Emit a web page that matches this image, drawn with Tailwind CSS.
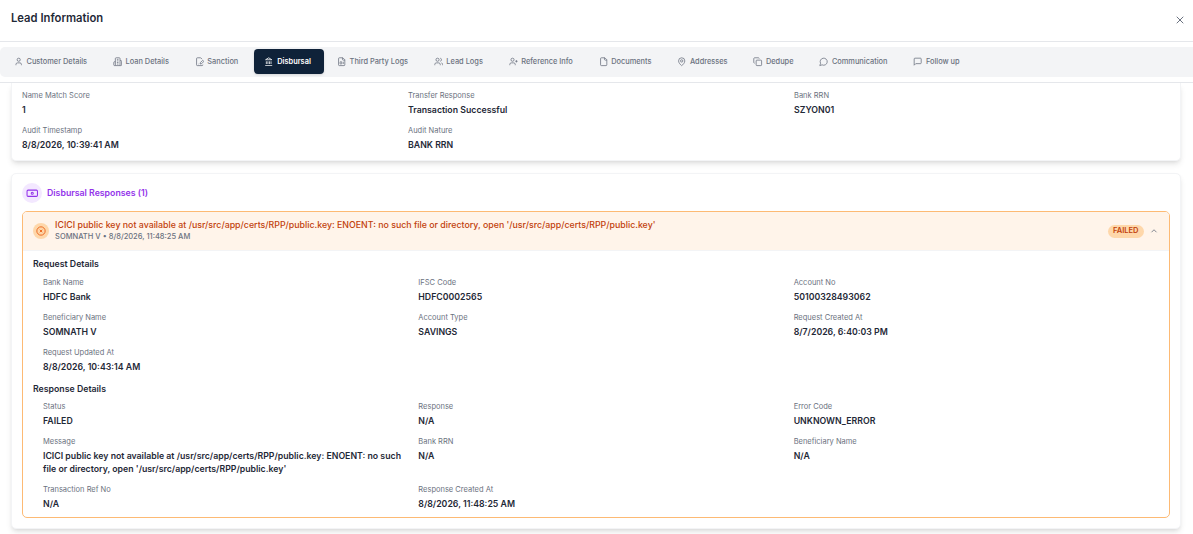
<!DOCTYPE html>
<html lang="en">
<head>
    <meta charset="UTF-8">
    <title>Lead Information</title>
    <script src="https://cdn.jsdelivr.net/npm/@tailwindcss/browser@4"></script>
</head>
<body class="bg-white font-['Inter',sans-serif] antialiased">
<div class="h-[534px] w-[1193px] overflow-hidden flex flex-col">

    <!-- Header -->
    <div class="h-[42px] shrink-0 border-b border-[#e5e7eb] flex items-center justify-between pl-[11px] pr-[7px]">
        <h1 class="text-[11.25px] font-semibold text-[#1f2937] -mt-[4px]">Lead Information</h1>
        <svg class="w-[12px] h-[12px] text-[#6b7280] -mt-[2px]" viewBox="0 0 24 24" fill="none" stroke="currentColor" stroke-width="2" stroke-linecap="round"><path d="M18 6 6 18M6 6l12 12"/></svg>
    </div>

    <!-- Tabs -->
    <div class="h-[41px] shrink-0 border-b border-[#e5e7eb] pt-[5px]">
        <div class="h-[30px] bg-[#f3f4f6] rounded-l-[5px] flex items-center gap-[5.9px] pl-[4px] text-[7.4px] font-medium text-[#6b7280]">
            <div class="flex items-center gap-[3.1px] px-[10px]">
                <svg class="w-[9.4px] h-[9.4px]" viewBox="0 0 24 24" fill="none" stroke="currentColor" stroke-width="2"><path d="M19 21v-2a4 4 0 0 0-4-4H9a4 4 0 0 0-4 4v2"/><circle cx="12" cy="7" r="4"/></svg>
                <span>Customer Details</span>
            </div>
            <div class="flex items-center gap-[3.1px] px-[10px]">
                <svg class="w-[9.4px] h-[9.4px]" viewBox="0 0 24 24" fill="none" stroke="currentColor" stroke-width="2"><path d="M6 22V4a2 2 0 0 1 2-2h8a2 2 0 0 1 2 2v18Z"/><path d="M6 12H4a2 2 0 0 0-2 2v6a2 2 0 0 0 2 2h2M18 9h2a2 2 0 0 1 2 2v9a2 2 0 0 1-2 2h-2M10 6h4M10 10h4M10 14h4M10 18h4"/></svg>
                <span>Loan Details</span>
            </div>
            <div class="flex items-center gap-[3.1px] px-[10px]">
                <svg class="w-[9.4px] h-[9.4px]" viewBox="0 0 24 24" fill="none" stroke="currentColor" stroke-width="2"><path d="M20 19.5v.5a2 2 0 0 1-2 2H6a2 2 0 0 1-2-2V4a2 2 0 0 1 2-2h8.5L18 5.5"/><path d="M8 18h1M18.4 9.6a2 2 0 1 1 3 3L17 17l-4 1 1-4Z"/></svg>
                <span>Sanction</span>
            </div>
            <div class="flex items-center gap-[3.6px] w-[70px] h-[25px] -mr-[3px] mb-[1px] pl-[10px] rounded-[4px] bg-[#0f2239] text-white font-semibold shadow-sm">
                <svg class="w-[9.4px] h-[9.4px]" viewBox="0 0 24 24" fill="none" stroke="currentColor" stroke-width="2"><path d="M3 22h18M6 18v-7M10 18v-7M14 18v-7M18 18v-7M12 2l8 5H4Z"/></svg>
                <span>Disbursal</span>
            </div>
            <div class="flex items-center gap-[3.1px] px-[10px]">
                <svg class="w-[9.4px] h-[9.4px]" viewBox="0 0 24 24" fill="none" stroke="currentColor" stroke-width="2"><path d="M15 2H6a2 2 0 0 0-2 2v16a2 2 0 0 0 2 2h12a2 2 0 0 0 2-2V7Z"/><path d="M14 2v4a2 2 0 0 0 2 2h4"/><rect width="4" height="6" x="8" y="12" rx="1"/><path d="M16 12v6"/></svg>
                <span>Third Party Logs</span>
            </div>
            <div class="flex items-center gap-[3.1px] px-[10px]">
                <svg class="w-[9.4px] h-[9.4px]" viewBox="0 0 24 24" fill="none" stroke="currentColor" stroke-width="2"><path d="M16 21v-2a4 4 0 0 0-4-4H6a4 4 0 0 0-4 4v2"/><circle cx="9" cy="7" r="4"/><path d="M22 21v-2a4 4 0 0 0-3-3.900M16 3.100a4 4 0 0 1 0 7.800"/></svg>
                <span>Lead Logs</span>
            </div>
            <div class="flex items-center gap-[3.1px] px-[10px]">
                <svg class="w-[9.4px] h-[9.4px]" viewBox="0 0 24 24" fill="none" stroke="currentColor" stroke-width="2"><path d="M16 21v-2a4 4 0 0 0-4-4H6a4 4 0 0 0-4 4v2"/><circle cx="9" cy="7" r="4"/><path d="M19 8v6M22 11h-6"/></svg>
                <span>Reference Info</span>
            </div>
            <div class="flex items-center gap-[3.1px] px-[10px]">
                <svg class="w-[9.4px] h-[9.4px]" viewBox="0 0 24 24" fill="none" stroke="currentColor" stroke-width="2"><path d="M15 2H6a2 2 0 0 0-2 2v16a2 2 0 0 0 2 2h12a2 2 0 0 0 2-2V7Z"/><path d="M14 2v4a2 2 0 0 0 2 2h4"/></svg>
                <span>Documents</span>
            </div>
            <div class="flex items-center gap-[3.1px] px-[10px]">
                <svg class="w-[9.4px] h-[9.4px]" viewBox="0 0 24 24" fill="none" stroke="currentColor" stroke-width="2"><path d="M20 10c0 5-5.500 10.200-7.400 11.800a1 1 0 0 1-1.200 0C9.500 20.200 4 15 4 10a8 8 0 0 1 16 0"/><circle cx="12" cy="10" r="3"/></svg>
                <span>Addresses</span>
            </div>
            <div class="flex items-center gap-[3.1px] px-[10px]">
                <svg class="w-[9.4px] h-[9.4px]" viewBox="0 0 24 24" fill="none" stroke="currentColor" stroke-width="2"><rect width="14" height="14" x="8" y="8" rx="2"/><path d="M4 16c-1.100 0-2-.9-2-2V4c0-1.100.9-2 2-2h10c1.100 0 2 .9 2 2"/></svg>
                <span>Dedupe</span>
            </div>
            <div class="flex items-center gap-[3.1px] px-[10px]">
                <svg class="w-[9.4px] h-[9.4px]" viewBox="0 0 24 24" fill="none" stroke="currentColor" stroke-width="2"><path d="M7.900 20A9 9 0 1 0 4 16.100L2 22Z"/></svg>
                <span>Communication</span>
            </div>
            <div class="flex items-center gap-[3.1px] px-[10px]">
                <svg class="w-[9.4px] h-[9.4px]" viewBox="0 0 24 24" fill="none" stroke="currentColor" stroke-width="2"><path d="M21 15a2 2 0 0 1-2 2H7l-4 4V5a2 2 0 0 1 2-2h14a2 2 0 0 1 2 2Z"/></svg>
                <span>Follow up</span>
            </div>
        </div>
    </div>

    <!-- Scroll content -->
    <div class="flex-1 pl-[11px] pr-[12px] overflow-hidden">
        <!-- Top card -->
        <div class="h-[78px] bg-white rounded-b-[5px] border-x border-b border-[#f3f4f6] shadow-md pl-[10px] pr-[12.5px] pt-[8px]">
            <div class="grid grid-cols-3 gap-x-[12.5px] gap-y-[9.5px]">
                <div><p class="text-[7.5px] text-[#6b7280] leading-[10px]">Name Match Score</p><p class="text-[8.75px] font-semibold text-[#1f2937] leading-[12.5px] mt-[3px]">1</p></div>
                <div><p class="text-[7.5px] text-[#6b7280] leading-[10px]">Transfer Response</p><p class="text-[8.75px] font-semibold text-[#1f2937] leading-[12.5px] mt-[3px]">Transaction Successful</p></div>
                <div><p class="text-[7.5px] text-[#6b7280] leading-[10px]">Bank RRN</p><p class="text-[8.75px] font-semibold text-[#1f2937] leading-[12.5px] mt-[3px]">SZYON01</p></div>
                <div><p class="text-[7.5px] text-[#6b7280] leading-[10px]">Audit Timestamp</p><p class="text-[8.75px] font-semibold text-[#1f2937] leading-[12.5px] mt-[3px]">8/8/2026, 10:39:41 AM</p></div>
                <div><p class="text-[7.5px] text-[#6b7280] leading-[10px]">Audit Nature</p><p class="text-[8.75px] font-semibold text-[#1f2937] leading-[12.5px] mt-[3px]">BANK RRN</p></div>
            </div>
        </div>

        <!-- Responses card -->
        <div class="mt-[12px] bg-white rounded-[5px] border border-[#f3f4f6] shadow-md px-[10px] pt-[9px] pb-[10px]">
            <div class="flex items-center gap-[5px] h-[20px]">
                <div class="w-[20px] h-[20px] rounded-full bg-[#f3e8ff] flex items-center justify-center text-[#9333ea]">
                    <svg class="w-[12.5px] h-[12.5px]" viewBox="0 0 24 24" fill="none" stroke="currentColor" stroke-width="2"><rect width="20" height="12" x="2" y="6" rx="2"/><circle cx="12" cy="12" r="2"/></svg>
                </div>
                <h2 class="text-[8.75px] font-semibold text-[#9333ea] mt-[1px]">Disbursal Responses (1)</h2>
            </div>

            <div class="mt-[8px] rounded-[5px] border border-[#fdba74] overflow-hidden">
                <div class="h-[39px] bg-[#fff4ea] border-b border-[#f3f4f6] flex items-center pl-[10px] pr-[10px]">
                    <div class="w-[15.6px] h-[15.6px] rounded-full bg-[#fed7aa] flex items-center justify-center text-[#ea580c] shrink-0">
                        <svg class="w-[10px] h-[10px]" viewBox="0 0 24 24" fill="none" stroke="currentColor" stroke-width="2"><circle cx="12" cy="12" r="10"/><path d="m15 9-6 6M9 9l6 6"/></svg>
                    </div>
                    <div class="ml-[6.5px] flex-1 -mt-[1px]">
                        <p class="text-[8.82px] font-medium text-[#c2410c] leading-[12.5px]">ICICI public key not available at /usr/src/app/certs/RPP/public.key: ENOENT: no such file or directory, open '/usr/src/app/certs/RPP/public.key'</p>
                        <p class="text-[7.5px] font-medium text-[#6b7280] leading-[10px]">SOMNATH V • 8/8/2026, 11:48:25 AM</p>
                    </div>
                    <span class="h-[13px] px-[5px] rounded-full bg-[#fed7aa] text-[#c2410c] text-[7.5px] font-semibold flex items-center">FAILED</span>
                    <svg class="ml-[5.5px] w-[10px] h-[10px] text-[#6b7280]" viewBox="0 0 24 24" fill="none" stroke="currentColor" stroke-width="2"><path d="m18 15-6-6-6 6"/></svg>
                </div>
                <div class="pl-[10px] pr-[12.5px] pt-[7px] pb-[6.25px]">
                    <h3 class="text-[8.75px] font-semibold text-[#1f2937] leading-[12.5px]">Request Details</h3>
                    <div class="mt-[7.75px] ml-[10px] grid grid-cols-3 gap-x-[12.5px] gap-y-[9.5px]">
                        <div><p class="text-[7.5px] text-[#6b7280] leading-[10px]">Bank Name</p><p class="text-[8.75px] font-semibold text-[#1f2937] leading-[12.5px] mt-[3px]">HDFC Bank</p></div>
                        <div><p class="text-[7.5px] text-[#6b7280] leading-[10px]">IFSC Code</p><p class="text-[8.75px] font-semibold text-[#1f2937] leading-[12.5px] mt-[3px]">HDFC0002565</p></div>
                        <div><p class="text-[7.5px] text-[#6b7280] leading-[10px]">Account No</p><p class="text-[8.75px] font-semibold text-[#1f2937] leading-[12.5px] mt-[3px]">50100328493062</p></div>
                        <div><p class="text-[7.5px] text-[#6b7280] leading-[10px]">Beneficiary Name</p><p class="text-[8.75px] font-semibold text-[#1f2937] leading-[12.5px] mt-[3px]">SOMNATH V</p></div>
                        <div><p class="text-[7.5px] text-[#6b7280] leading-[10px]">Account Type</p><p class="text-[8.75px] font-semibold text-[#1f2937] leading-[12.5px] mt-[3px]">SAVINGS</p></div>
                        <div><p class="text-[7.5px] text-[#6b7280] leading-[10px]">Request Created At</p><p class="text-[8.75px] font-semibold text-[#1f2937] leading-[12.5px] mt-[3px]">8/7/2026, 6:40:03 PM</p></div>
                        <div><p class="text-[7.5px] text-[#6b7280] leading-[10px]">Request Updated At</p><p class="text-[8.75px] font-semibold text-[#1f2937] leading-[12.5px] mt-[3px]">8/8/2026, 10:43:14 AM</p></div>
                    </div>
                    <h3 class="mt-[9.5px] text-[8.75px] font-semibold text-[#1f2937] leading-[12.5px]">Response Details</h3>
                    <div class="mt-[6.5px] ml-[10px] grid grid-cols-3 gap-x-[12.5px] gap-y-[9.5px]">
                        <div><p class="text-[7.5px] text-[#6b7280] leading-[10px]">Status</p><p class="text-[8.75px] font-semibold text-[#1f2937] leading-[12.5px] mt-[3px]">FAILED</p></div>
                        <div><p class="text-[7.5px] text-[#6b7280] leading-[10px]">Response</p><p class="text-[8.75px] font-semibold text-[#1f2937] leading-[12.5px] mt-[3px]">N/A</p></div>
                        <div><p class="text-[7.5px] text-[#6b7280] leading-[10px]">Error Code</p><p class="text-[8.75px] font-semibold text-[#1f2937] leading-[12.5px] mt-[3px]">UNKNOWN_ERROR</p></div>
                        <div><p class="text-[7.5px] text-[#6b7280] leading-[10px]">Message</p><p class="text-[8.75px] font-semibold text-[#1f2937] leading-[12.5px] mt-[3px]">ICICI public key not available at /usr/src/app/certs/RPP/public.key: ENOENT: no such file or directory, open '/usr/src/app/certs/RPP/public.key'</p></div>
                        <div><p class="text-[7.5px] text-[#6b7280] leading-[10px]">Bank RRN</p><p class="text-[8.75px] font-semibold text-[#1f2937] leading-[12.5px] mt-[3px]">N/A</p></div>
                        <div><p class="text-[7.5px] text-[#6b7280] leading-[10px]">Beneficiary Name</p><p class="text-[8.75px] font-semibold text-[#1f2937] leading-[12.5px] mt-[3px]">N/A</p></div>
                        <div><p class="text-[7.5px] text-[#6b7280] leading-[10px]">Transaction Ref No</p><p class="text-[8.75px] font-semibold text-[#1f2937] leading-[12.5px] mt-[3px]">N/A</p></div>
                        <div><p class="text-[7.5px] text-[#6b7280] leading-[10px]">Response Created At</p><p class="text-[8.75px] font-semibold text-[#1f2937] leading-[12.5px] mt-[3px]">8/8/2026, 11:48:25 AM</p></div>
                    </div>
                </div>
            </div>
        </div>
    </div>
</div>
</body>
</html>
